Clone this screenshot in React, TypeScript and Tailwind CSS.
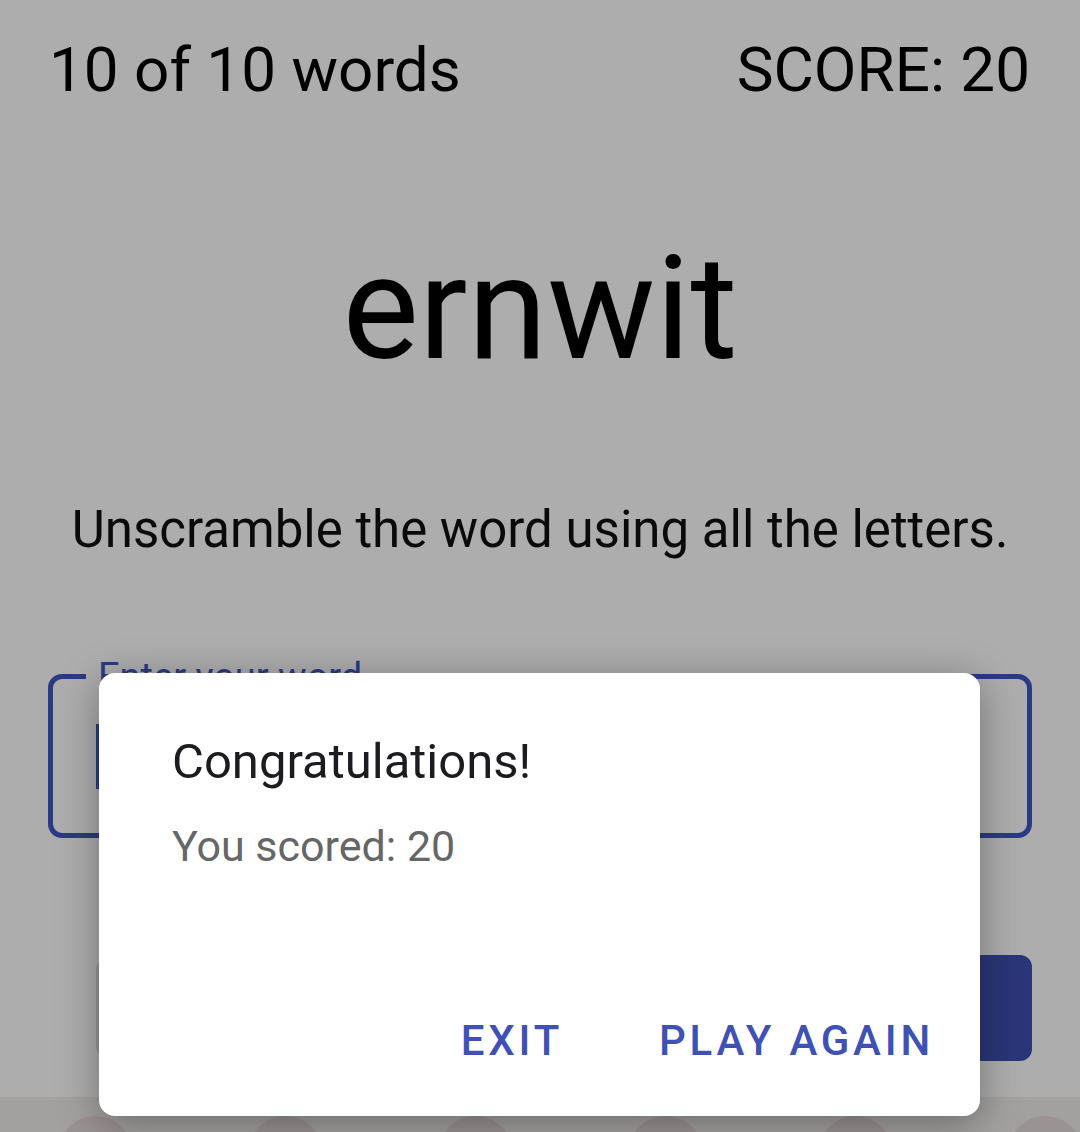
import React from 'react';

const circles = [0, 1, 2, 3, 4, 5];

const App: React.FC = () => {
  return (
    <div className="relative h-[1132px] w-full overflow-hidden bg-[#adadad] font-['Roboto',sans-serif]">
      {/* game screen, seen through the scrim */}
      <div className="flex flex-col px-[48px] pt-[34px]">
        <div className="flex justify-between pl-[1px] pr-[2px] text-[62px] leading-[72px] text-black">
          <span>10 of 10 words</span>
          <span>SCORE: 20</span>
        </div>

        <div className="mt-[121px] text-center text-[144px] leading-[164px] text-black">ernwit</div>

        <div className="mt-[108px] text-center text-[51px] leading-[62px] text-[#0a0a0a]">
          Unscramble the word using all the letters.
        </div>

        <div className="relative mt-[113px] flex h-[164px] items-center rounded-[14px] border-[5px] border-[#2b3a85] pl-[43px]">
          <span className="absolute left-[33px] top-[-24px] bg-[#adadad] px-[12px] text-[38px] leading-[44px] text-[#2b3a85]">
            Enter your word
          </span>
          <span className="h-[65px] w-[3px] bg-[#2b3a85]" />
        </div>

        <div className="ml-[48px] mt-[117px] flex h-[106px] gap-[40px]">
          <div className="h-[100px] w-[424px] self-center rounded-[12px] border-[3px] border-[#969696]" />
          <div className="flex-1 rounded-[12px] bg-[#2b3679]" />
        </div>
      </div>

      <div className="mt-[36px] flex h-[120px] gap-[115px] bg-[#a3a0a0] pl-[58px] pt-[19px]">
        {circles.map((c) => (
          <div key={c} className="h-[75px] w-[75px] shrink-0 rounded-full bg-[#9a9393]" />
        ))}
      </div>

      {/* dialog */}
      <div className="absolute left-[99px] top-[673px] flex h-[443px] w-[881px] flex-col rounded-[16px] bg-white pl-[73px] pr-[46px] pt-[62px] pb-[50px] shadow-[0_8px_40px_rgba(0,0,0,0.35)]">
        <div className="text-[49px] leading-[54px] text-[#1c1b1f]">Congratulations!</div>
        <div className="mt-[32px] text-[43px] leading-[50px] text-[#666666]">You scored: 20</div>
        <div className="mt-auto flex justify-end gap-[96px] text-[42px] font-medium leading-[50px] tracking-[0.09em] text-[#3f51b5]">
          <span>EXIT</span>
          <span>PLAY AGAIN</span>
        </div>
      </div>
    </div>
  );
};

export default App;
